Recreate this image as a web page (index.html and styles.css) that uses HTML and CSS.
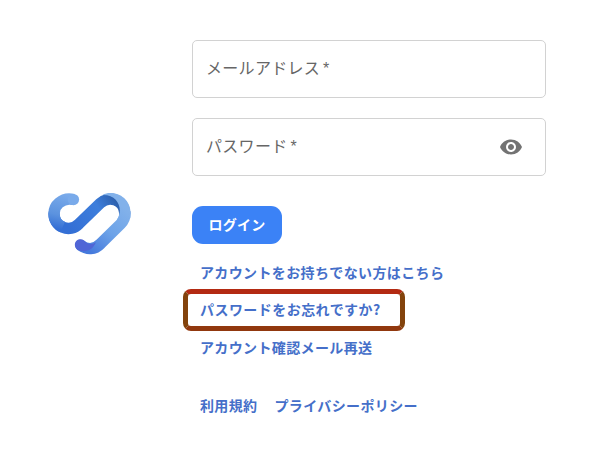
FILE: index.html
```html
<!DOCTYPE html>
<html lang="ja">
<head>
  <meta charset="UTF-8" />
  <title>ログイン</title>
  <link rel="stylesheet" href="styles.css">
</head>
<body>
  <main class="login">
    <div class="brand">
      <svg class="logo" viewBox="20 36 254 190" fill="none" stroke-width="34" stroke-linecap="round">
        <defs>
          <linearGradient id="hook" gradientUnits="userSpaceOnUse" x1="85" y1="45" x2="62" y2="148">
            <stop offset="0" stop-color="#79aaea" />
            <stop offset="0.6" stop-color="#5c93df" />
            <stop offset="1" stop-color="#346fd5" />
          </linearGradient>
          <linearGradient id="bar" gradientUnits="userSpaceOnUse" x1="85" y1="145" x2="225" y2="55">
            <stop offset="0" stop-color="#346fd5" />
            <stop offset="0.65" stop-color="#3d7edc" />
            <stop offset="1" stop-color="#2c5fab" />
          </linearGradient>
          <linearGradient id="tail" gradientUnits="userSpaceOnUse" x1="235" y1="70" x2="130" y2="200">
            <stop offset="0" stop-color="#82b1ea" />
            <stop offset="0.5" stop-color="#6da3e8" />
            <stop offset="1" stop-color="#4579dc" />
          </linearGradient>
        </defs>
        <path stroke="url(#tail)" d="M253 100A43 43 0 0 1 240 131L180 190C163 208 139 208 121 195" />
        <path fill="#5065d6" d="M108 181C121 170 134 181 138 187C149 193 160 191 166 185C158 211 132 217 112 209C101 201 101 188 108 181Z" />
        <path stroke="url(#bar)" d="M41 100A43 43 0 0 0 115 131L179 69A43 43 0 0 1 252 96" />
        <path fill="url(#tail)" d="M186 44C216 28 270 46 270 100L269 112L229 118C248 91 236 43 186 44Z" />
        <path stroke="url(#hook)" d="M99 58C84 54 68 58 56 68C45 77 41 88 41 100A43 43 0 0 0 67 140" stroke-linecap="butt" />
        <circle cx="99" cy="58" r="17" fill="#79aaea" />
      </svg>
    </div>

    <form class="login-form">
      <label class="field">
        <span class="field-label">メールアドレス<span class="required">*</span></span>
      </label>
      <label class="field">
        <span class="field-label">パスワード<span class="required">*</span></span>
        <svg class="eye" viewBox="0 0 24 24">
          <path d="M12 4.5C7 4.5 2.73 7.61 1 12c1.73 4.39 6 7.5 11 7.5s9.27-3.11 11-7.5c-1.73-4.39-6-7.5-11-7.5zM12 17c-2.76 0-5-2.24-5-5s2.24-5 5-5 5 2.24 5 5-2.24 5-5 5zm0-8c-1.66 0-3 1.34-3 3s1.34 3 3 3 3-1.34 3-3-1.34-3-3-3z" />
        </svg>
      </label>

      <button type="button" class="submit">ログイン</button>

      <nav class="links">
        <a class="link">アカウントをお持ちでない方はこちら</a>
        <a class="link highlighted">パスワードをお忘れですか?</a>
        <a class="link">アカウント確認メール再送</a>
      </nav>

      <footer class="legal">
        <a class="link">利用規約</a>
        <a class="link">プライバシーポリシー</a>
      </footer>
    </form>
  </main>
</body>
</html>
```
FILE: styles.css
```css
* {
  box-sizing: border-box;
}

body {
  margin: 0;
  background-color: #fff;
  font-family: "Noto Sans CJK JP", sans-serif;
}

.login {
  display: flex;
  height: 452px;
  padding-left: 47px;
}

.brand {
  width: 145px;
  padding-top: 192px;
}

.logo {
  display: block;
  width: 85px;
  height: 64px;
}

.login-form {
  display: flex;
  flex-direction: column;
  align-items: flex-start;
  width: 354px;
  padding-top: 40px;
}

.field {
  display: flex;
  align-items: center;
  justify-content: space-between;
  width: 100%;
  height: 58px;
  margin-bottom: 20px;
  padding: 0 22px 2px 13px;
  border: 1px solid #d2d2d2;
  border-radius: 5px;
}

.field-label {
  color: #666;
  font-size: 16px;
  letter-spacing: 0.3px;
  line-height: 24px;
}

.required {
  margin-left: 3px;
  font-family: "Liberation Sans", sans-serif;
}

.eye {
  width: 24px;
  height: 24px;
  margin-top: 2px;
  fill: #737373;
}

.submit {
  width: 90px;
  height: 38px;
  margin: 10px 0 9px;
  padding: 0 0 2px;
  border: none;
  border-radius: 11px;
  background-color: #3b82f6;
  color: #fff;
  font-family: inherit;
  font-size: 14px;
  font-weight: 700;
  letter-spacing: 0.3px;
}

.links {
  display: flex;
  flex-direction: column;
  align-items: flex-start;
}

.link {
  display: flex;
  align-items: center;
  height: 37px;
  padding-left: 8px;
  color: #456fc9;
  font-size: 14px;
  font-weight: 700;
  letter-spacing: 0.37px;
  white-space: nowrap;
}

/* frame drawn round the reset link */
.highlighted {
  width: 222px;
  height: 42px;
  margin: -1px 0 -3px -9px;
  padding: 0 0 2px 12px;
  border: 5px solid #83430c;
  border-top-color: #b32a12;
  border-bottom-color: #91380e;
  border-radius: 8px;
  letter-spacing: 0.45px;
}

.legal {
  display: flex;
  gap: 9px;
  margin-top: 21px;
}
```
